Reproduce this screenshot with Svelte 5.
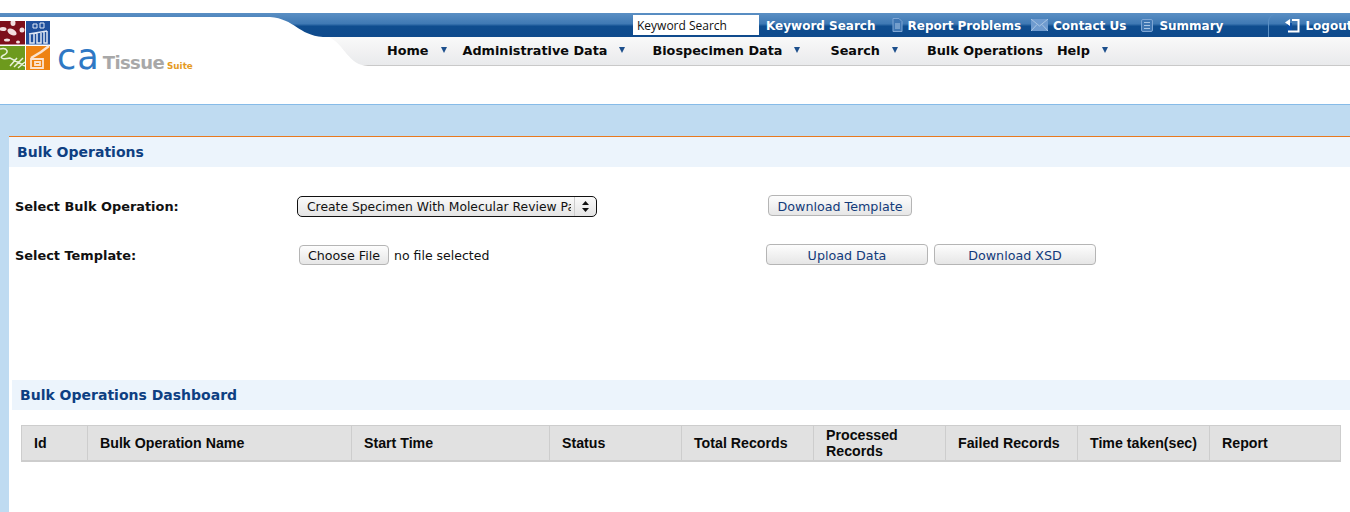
<script>
  const operations = ['Create Specimen With Molecular Review Parameters', 'Create Participant', 'Edit Specimen'];
  let operation = operations[0];

  const menu = [
    { label: 'Home', after: 16, arrow: true },
    { label: 'Administrative Data', after: 27, arrow: true },
    { label: 'Biospecimen Data', after: 30, arrow: true },
    { label: 'Search', after: 29, arrow: true },
    { label: 'Bulk Operations', after: 14, arrow: false },
    { label: 'Help', after: 0, arrow: true }
  ];

  const columns = [
    { label: 'Id', width: 66 },
    { label: 'Bulk Operation Name', width: 264 },
    { label: 'Start Time', width: 198 },
    { label: 'Status', width: 132 },
    { label: 'Total Records', width: 132 },
    { label: 'Processed Records', width: 132 },
    { label: 'Failed Records', width: 132 },
    { label: 'Time taken(sec)', width: 132 },
    { label: 'Report', width: 131 }
  ];
</script>

<header class="header">
  <div class="bluebar">
    <input class="search" type="text" value="Keyword Search" />
    <a class="toplink first">Keyword Search</a>
    <svg class="topicon" width="11" height="14" viewBox="0 0 11 14">
      <path d="M1 .5h6l3 3v10H1z" fill="#3f76b3" stroke="#7fa6d4" />
      <path d="M3 6h5M3 8h5M3 10h5" stroke="#a9c5e4" />
    </svg>
    <a class="toplink">Report Problems</a>
    <svg class="topicon mail" width="17" height="12" viewBox="0 0 17 12">
      <rect width="17" height="12" fill="#6f9bcf" />
      <path d="M0 0l8.500 7L17 0M0 12l6-6.500M17 12l-6-6.500" fill="none" stroke="#a9c5e4" />
    </svg>
    <a class="toplink">Contact Us</a>
    <svg class="topicon sum" width="12" height="13" viewBox="0 0 12 13">
      <rect x=".5" y=".5" width="11" height="12" rx="1.500" fill="#3f76b3" stroke="#7fa6d4" />
      <path d="M3 3.500h6M3 6.500h6M3 9.500h6" stroke="#a9c5e4" />
    </svg>
    <a class="toplink">Summary</a>
    <div class="logout">
      <svg width="16" height="15" viewBox="0 0 16 15">
        <rect x="3" y="5" width="5" height="9" fill="#0b4ea2" />
        <path d="M8 2h6.500v11.500H4" fill="none" stroke="#fff" stroke-width="2" />
        <path d="M1 4.500L6 1v7z" fill="#fff" />
      </svg>
      <a class="toplink">Logout</a>
    </div>
  </div>

  <nav class="menubar">
    {#each menu as item}
      <a class="menuitem">{item.label}</a>
      {#if item.arrow}
        <span class="arrow" style="margin-right: {item.after}px"></span>
      {:else}
        <span style="width: {item.after}px"></span>
      {/if}
    {/each}
  </nav>

  <div class="logo">
    <svg class="curve" width="380" height="54" viewBox="0 0 380 54">
      <path d="M0 4H270C295 6 298 22 323 24H329C345 32 348 52 368 53H0z" fill="#fff" />
    </svg>
    <div class="tiles">
      <svg width="50" height="49" viewBox="0 0 50 49">
        <rect x="0" y="0" width="25" height="23.500" fill="#7d0f1b" />
        <g fill="#f2dfe0">
          <ellipse cx="3" cy="8" rx="3.500" ry="2" />
          <ellipse cx="12" cy="11" rx="5" ry="3" transform="rotate(30 12 11)" />
          <ellipse cx="13" cy="2" rx="2.500" ry="3" />
          <ellipse cx="22" cy="9" rx="2.500" ry="2.500" />
          <ellipse cx="7" cy="19" rx="3" ry="1.500" />
          <ellipse cx="18" cy="21" rx="2" ry="1.500" />
        </g>
        <rect x="26" y="0" width="24" height="23.500" fill="#1f4f9c" />
        <path d="M29 13l18-3M30 13v9h4v-9M37 12v10h4V11M44 11v11h3V10" fill="none" stroke="#dfe7f4" stroke-width="1.500" />
        <path d="M33 3h4v4h-4zM40 2h4v5h-4z" fill="none" stroke="#dfe7f4" />
        <rect x="0" y="25" width="25" height="24" fill="#6d9a1d" />
        <path d="M0 28c8-2 9 4 4 6s-3 5 6 3l15 8M14 46l9-9M10 45l7-8M18 47l7-6" fill="none" stroke="#e8f0d8" stroke-width="1.500" />
        <rect x="26" y="25" width="24" height="24" fill="#ee8211" />
        <path d="M31 37l10-6 8-6" fill="none" stroke="#fbe3cf" stroke-width="2.500" />
        <path d="M31 38h12v9H31zM35 41h5v3h-5z" fill="none" stroke="#fbe3cf" stroke-width="1.800" />
      </svg>
    </div>
    <div class="wordmark">
      <span class="ca">ca</span><span class="tissue">Tissue</span><span class="suite">Suite</span>
    </div>
  </div>
</header>

<main class="page">
  <div class="content">
    <h2 class="sectionhead">Bulk Operations</h2>

    <div class="form">
      <label class="fieldlabel" for="operation">Select Bulk Operation:</label>
      <div class="selectwrap">
        <select id="operation" bind:value={operation}>
          {#each operations as op}
            <option value={op}>{op}</option>
          {/each}
        </select>
        <span class="selectarrows">
          <svg width="7" height="11" viewBox="0 0 7 11">
            <path d="M3.500 0L7 4H0zM3.500 11L0 7h7z" fill="#111" />
          </svg>
        </span>
      </div>
      <div class="actions">
        <button class="btn template">Download Template</button>
      </div>

      <label class="fieldlabel" for="template">Select Template:</label>
      <div class="filepick">
        <button id="template" class="btn choose">Choose File</button>
        <span>no file selected</span>
      </div>
      <div class="actions second">
        <button class="btn wide">Upload Data</button>
        <button class="btn wide">Download XSD</button>
      </div>
    </div>

    <section class="dashboard">
      <h2 class="sectionhead">Bulk Operations Dashboard</h2>
      <table>
        <thead>
          <tr>
            {#each columns as col}
              <th style="width: {col.width}px">{col.label}</th>
            {/each}
          </tr>
        </thead>
      </table>
    </section>
  </div>
</main>

<style>
  :global(body) {
    margin: 0;
    background: #fff;
    overflow: hidden;
  }

  .header {
    position: relative;
    box-sizing: border-box;
    height: 105px;
    padding-top: 13px;
    background: #fff;
    border-bottom: 1px solid #86bbe8;
    font-family: "DejaVu Sans", Verdana, sans-serif;
  }

  .bluebar {
    display: flex;
    align-items: center;
    box-sizing: border-box;
    height: 24px;
    padding-left: 633px;
    background: linear-gradient(#5a8fc4, #3f79b4 45%, #0f4d8f 55%, #0f4a8c);
    overflow: hidden;
  }

  .search {
    flex: none;
    box-sizing: border-box;
    width: 126px;
    height: 20px;
    padding: 0 4px;
    border: 0;
    background: #fff;
    color: #111;
    font-family: "Open Sans", sans-serif;
    font-size: 12px;
  }

  .toplink {
    padding-top: 1px;
    color: #fff;
    font-size: 12px;
    font-weight: 700;
    white-space: nowrap;
  }

  .toplink.first {
    margin-left: 7px;
  }

  .topicon {
    flex: none;
    margin: 0 5px 0 16px;
  }

  .topicon.mail {
    margin: 0 5px 0 10px;
  }

  .topicon.sum {
    margin: 0 6px 0 15px;
  }

  .logout {
    flex: none;
    display: flex;
    align-items: center;
    gap: 5px;
    box-sizing: border-box;
    height: 24px;
    margin-left: 45px;
    padding-left: 15px;
    border: 1px solid #5a8fc4;
    border-bottom: 0;
    border-radius: 9px 0 0 0;
  }

  .menubar {
    display: flex;
    align-items: center;
    box-sizing: border-box;
    height: 29px;
    padding: 0 0 2px 387px;
    background: linear-gradient(#f9f9f9, #e9eaec);
    border-bottom: 1px solid #c9c9c9;
  }

  .menuitem {
    color: #0a0a0a;
    font-size: 12.800px;
    font-weight: 700;
    white-space: nowrap;
  }

  .arrow {
    width: 0;
    height: 0;
    margin-left: 12px;
    border-left: 3.500px solid transparent;
    border-right: 3.500px solid transparent;
    border-top: 6px solid #1d4f8c;
  }

  .logo {
    position: absolute;
    left: 0;
    top: 13px;
    width: 380px;
    height: 54px;
  }

  .curve {
    position: absolute;
    left: 0;
    top: 0;
    display: block;
  }

  .tiles {
    position: absolute;
    left: 0;
    top: 8px;
    line-height: 0;
  }

  .wordmark {
    position: absolute;
    left: 57px;
    top: 26px;
    display: flex;
    align-items: baseline;
    font-family: "DejaVu Sans", sans-serif;
    white-space: nowrap;
  }

  .ca {
    color: #2f78c4;
    font-size: 35px;
    letter-spacing: 1px;
    line-height: 36px;
  }

  .tissue {
    margin-left: 3px;
    color: #a8a8a8;
    font-size: 18px;
    font-weight: 700;
    letter-spacing: -.6px;
  }

  .suite {
    margin-left: 3px;
    color: #e59b1f;
    font-size: 8.800px;
    font-weight: 700;
  }

  .page {
    box-sizing: border-box;
    height: 407px;
    padding: 31px 0 0 9px;
    background: #bfdbf1;
    overflow: hidden;
  }

  .content {
    height: 100%;
    background: #fff;
    border-top: 1px solid #e8791f;
  }

  .sectionhead {
    margin: 0;
    height: 30px;
    padding-left: 8px;
    background: #ecf4fc;
    color: #0e3f82;
    font-family: "DejaVu Sans", Verdana, sans-serif;
    font-size: 14px;
    font-weight: 700;
    line-height: 30px;
  }

  .form {
    display: grid;
    grid-template-columns: 282px 471px 1fr;
    grid-template-rows: 22px 22px;
    row-gap: 27px;
    align-items: center;
    padding: 28px 0 0 6px;
  }

  .fieldlabel {
    color: #111;
    font-family: "DejaVu Sans", Verdana, sans-serif;
    font-size: 12.900px;
    font-weight: 700;
  }

  .selectwrap {
    position: relative;
    align-self: end;
    width: 300px;
    height: 21px;
  }

  select {
    box-sizing: border-box;
    width: 100%;
    height: 21px;
    padding: 0 25px 0 9px;
    appearance: none;
    border: 1px solid #111;
    border-radius: 5px;
    background: linear-gradient(#fafafa, #e4e4e4);
    color: #111;
    font-family: "DejaVu Sans", sans-serif;
    font-size: 12.350px;
  }

  .selectarrows {
    position: absolute;
    right: 1px;
    top: 1px;
    bottom: 1px;
    display: flex;
    align-items: center;
    justify-content: center;
    width: 21px;
    border-left: 1px solid #ccc;
    pointer-events: none;
  }

  .filepick {
    display: flex;
    align-items: center;
    gap: 5px;
    padding-left: 2px;
    color: #111;
    font-family: "DejaVu Sans", sans-serif;
    font-size: 12.500px;
  }

  .btn {
    box-sizing: border-box;
    height: 21px;
    padding: 1px 0 0;
    border: 1px solid #b5b5b5;
    border-radius: 4px;
    background: linear-gradient(#fdfdfd, #e6e6e6);
    color: #123a7a;
    font-family: "DejaVu Sans", sans-serif;
    font-size: 12.700px;
  }

  .btn.choose {
    width: 90px;
    height: 20px;
    padding: 0;
    color: #111;
  }

  .btn.template {
    width: 144px;
  }

  .btn.wide {
    width: 162px;
  }

  .actions {
    display: flex;
    align-self: start;
    gap: 6px;
  }

  .actions.second {
    margin-left: -2px;
  }

  .dashboard {
    margin: 114px 0 0 3px;
  }

  table {
    width: 1319px;
    margin: 15px 0 0 9px;
    border-collapse: collapse;
    table-layout: fixed;
  }

  th {
    box-sizing: border-box;
    height: 35px;
    padding: 0 4px 0 12px;
    border: 2px solid #cdcdcd;
    border-width: 1px 1px 2px 1px;
    background: #e1e1e1;
    color: #0a0a0a;
    font-family: "Liberation Sans", Arial, sans-serif;
    font-size: 14.200px;
    font-weight: 700;
    line-height: 16px;
    text-align: left;
  }
</style>
